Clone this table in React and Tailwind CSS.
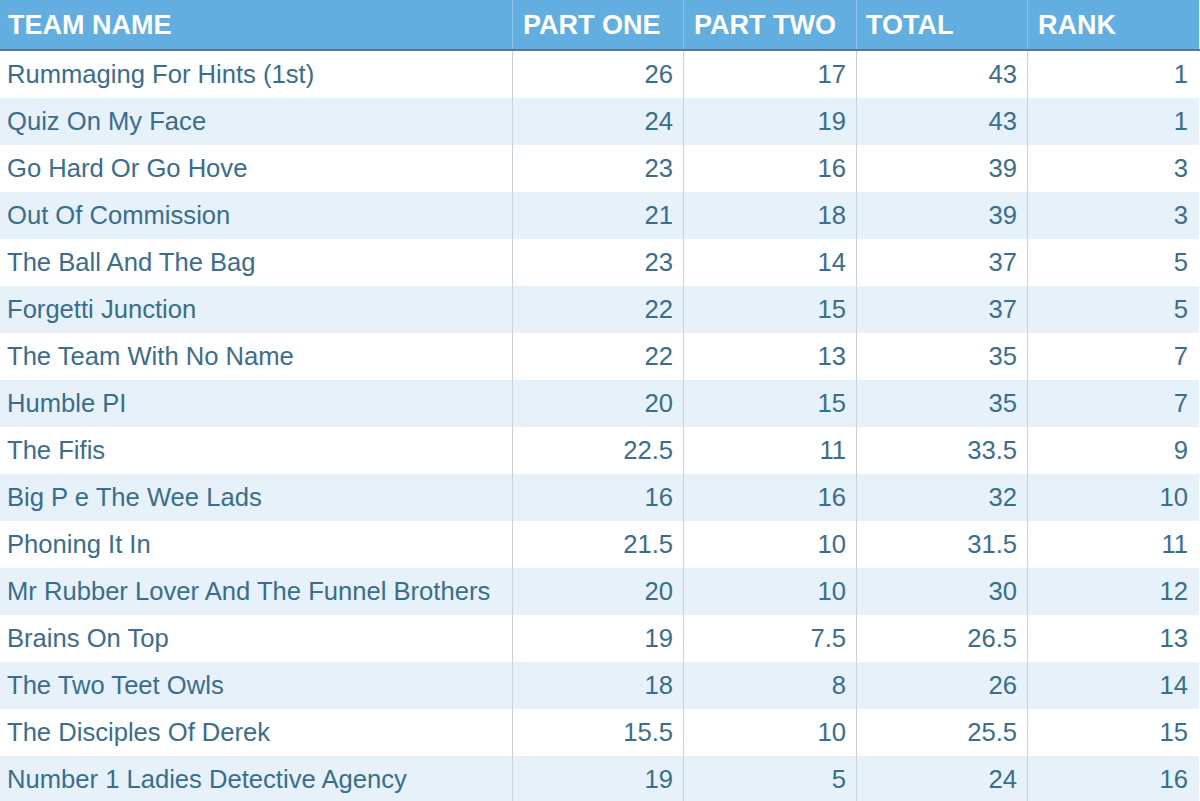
const rows = [
  ['Rummaging For Hints (1st)', '26', '17', '43', '1'],
  ['Quiz On My Face', '24', '19', '43', '1'],
  ['Go Hard Or Go Hove', '23', '16', '39', '3'],
  ['Out Of Commission', '21', '18', '39', '3'],
  ['The Ball And The Bag', '23', '14', '37', '5'],
  ['Forgetti Junction', '22', '15', '37', '5'],
  ['The Team With No Name', '22', '13', '35', '7'],
  ['Humble PI', '20', '15', '35', '7'],
  ['The Fifis', '22.5', '11', '33.5', '9'],
  ['Big P e The Wee Lads', '16', '16', '32', '10'],
  ['Phoning It In', '21.5', '10', '31.5', '11'],
  ['Mr Rubber Lover And The Funnel Brothers', '20', '10', '30', '12'],
  ['Brains On Top', '19', '7.5', '26.5', '13'],
  ['The Two Teet Owls', '18', '8', '26', '14'],
  ['The Disciples Of Derek', '15.5', '10', '25.5', '15'],
  ['Number 1 Ladies Detective Agency', '19', '5', '24', '16'],
];

const cols = 'grid grid-cols-[513px_171px_173px_171px_171px_1px]';

export default function App() {
  return (
    <div className="w-[1200px] h-[801px] overflow-hidden bg-white font-['Liberation_Sans',Arial,sans-serif]">
      {/* Header */}
      <div className={`${cols} h-[51px] bg-[#62aee0] border-b-2 border-[#52799a] text-white font-bold text-[27px] leading-none`}>
        <div className="flex items-center pt-[2px] pl-[8px] border-r border-[#8cc3e9]">TEAM NAME</div>
        <div className="flex items-center pt-[2px] pl-[10px] border-r border-[#8cc3e9]">PART ONE</div>
        <div className="flex items-center pt-[2px] pl-[10px] border-r border-[#8cc3e9]">PART TWO</div>
        <div className="flex items-center pt-[2px] pl-[9px] border-r border-[#8cc3e9]">TOTAL</div>
        <div className="flex items-center pt-[2px] pl-[10px]">RANK</div>
        <div className="bg-white" />
      </div>

      {/* Rows */}
      {rows.map((r, i) => (
        <div
          key={i}
          className={`${cols} h-[47px] text-[25.6px] leading-none text-[#3a6d8e] ${i % 2 ? 'bg-[#e6f1fa]' : 'bg-white'}`}
        >
          <div className="flex items-center pl-[7px] border-r border-[#c9d2da] whitespace-nowrap">{r[0]}</div>
          <div className="flex items-center justify-end pr-[10px] border-r border-[#c9d2da]">{r[1]}</div>
          <div className="flex items-center justify-end pr-[10px] border-r border-[#c9d2da]">{r[2]}</div>
          <div className="flex items-center justify-end pr-[10px] border-r border-[#c9d2da]">{r[3]}</div>
          <div className="flex items-center justify-end pr-[11px]">{r[4]}</div>
          <div className="bg-white" />
        </div>
      ))}
    </div>
  );
}
